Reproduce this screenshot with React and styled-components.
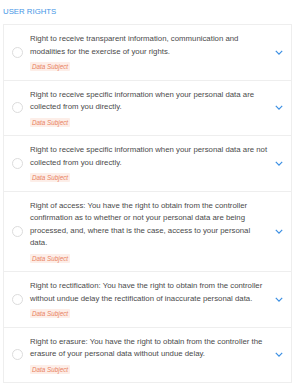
import styled, { createGlobalStyle } from "styled-components";

const GlobalStyle = createGlobalStyle`
  body {
    margin: 0;
    background: #fff;
    font-family: "Liberation Sans", Arial, sans-serif;
  }
`;

const rights = [
  "Right to receive transparent information, communication and modalities for the exercise of your rights.",
  "Right to receive specific information when your personal data are collected from you directly.",
  "Right to receive specific information when your personal data are not collected from you directly.",
  "Right of access: You have the right to obtain from the controller confirmation as to whether or not your personal data are being processed, and, where that is the case, access to your personal data.",
  "Right to rectification: You have the right to obtain from the controller without undue delay the rectification of inaccurate personal data.",
  "Right to erasure: You have the right to obtain from the controller the erasure of your personal data without undue delay.",
];

export default function App() {
  return (
    <Page>
      <GlobalStyle />
      <Title>USER RIGHTS</Title>
      <Card>
        {rights.map((text, idx) => (
          <Row key={idx}>
            <Radio />
            <Content>
              <Text>{text}</Text>
              <Badge>Data Subject</Badge>
            </Content>
            <Chevron viewBox="0 0 10 6">
              <path d="M1 1l4 4 4-4" fill="none" stroke="#3b8fe3" strokeWidth="1.5" />
            </Chevron>
          </Row>
        ))}
      </Card>
    </Page>
  );
}

const Page = styled.div`
  padding: 7px 4px 0 3px;
`;

const Title = styled.div`
  font-size: 7.8px;
  color: #4596e6;
  line-height: 10px;
  margin-bottom: 7px;
`;

const Card = styled.div`
  border: 1px solid #eeeeee;
  border-bottom: none;
`;

const Row = styled.div`
  display: flex;
  align-items: center;
  padding: 8px 8px 8.5px 8px;
  border-bottom: 1px solid #eeeeee;
`;

const Radio = styled.div`
  width: 9px;
  height: 9px;
  border: 1px solid #dcdcdc;
  border-radius: 50%;
  flex-shrink: 0;
  margin-right: 7px;
`;

const Content = styled.div`
  flex: 1;
  display: flex;
  flex-direction: column;
  align-items: flex-start;
`;

const Text = styled.div`
  font-size: 7.8px;
  line-height: 12.5px;
  color: #4a4a4a;
`;

const Badge = styled.span`
  margin-top: 4px;
  background: #fdeee8;
  color: #e8805e;
  font-style: italic;
  font-size: 6.3px;
  line-height: 9px;
  padding: 0 2px;
  border-radius: 1px;
`;

const Chevron = styled.svg`
  width: 8px;
  height: 5px;
  flex-shrink: 0;
  margin-left: 7px;
`;
